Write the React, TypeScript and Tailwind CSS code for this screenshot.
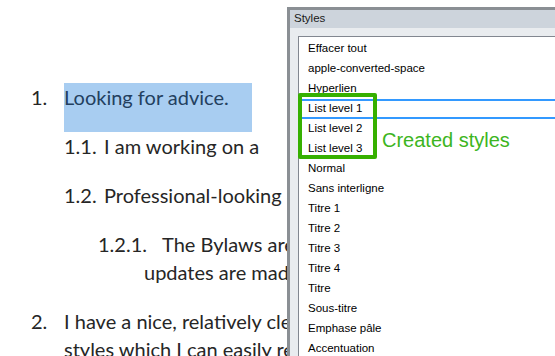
const styleItems = [
  'Effacer tout',
  'apple-converted-space',
  'Hyperlien',
  'List level 1',
  'List level 2',
  'List level 3',
  'Normal',
  'Sans interligne',
  'Titre 1',
  'Titre 2',
  'Titre 3',
  'Titre 4',
  'Titre',
  'Sous-titre',
  'Emphase pâle',
  'Accentuation',
  'Emphase intense',
];

const StylesPane = () => {
  return (
    <div className="absolute left-[287px] top-[7px] right-0 bottom-0 flex flex-col border-l-[3px] border-t-[3px] border-[#8a8f94] bg-[#e9ecef] font-['Liberation_Sans',sans-serif]">
      <div className="h-[18px] flex items-center pl-[4px] bg-[#cdd4dc] text-[11.5px] text-[#1a1a1a]">
        Styles
      </div>
      <div className="flex-1 pt-[8px] pl-[8px] overflow-hidden">
        <div className="h-full border-l border-t border-[#828790] bg-white pt-[2px]">
          {styleItems.map((name) => (
            <div
              key={name}
              className={`h-[20px] flex items-center pl-[9px] text-[11.5px] text-black whitespace-nowrap ${
                name === 'List level 1' ? 'border-y-2 border-[#3399ff]' : ''
              }`}
            >
              {name}
            </div>
          ))}
        </div>
      </div>
    </div>
  );
};

const App = () => {
  return (
    <div className="relative w-[555px] h-[356px] overflow-hidden bg-white">
      {/* document, clipped where the pane covers it */}
      <div className="w-[287px] h-full overflow-hidden pt-[83px] whitespace-nowrap font-['Lato',sans-serif] text-[20px] leading-[28px] text-[#262626]">
        {/* 1. */}
        <div className="flex pl-[31px]">
          <span className="w-[33px] shrink-0">1.</span>
          <span className="shrink-0 bg-[#a8cdf1] text-[#23405f] w-[188px] h-[49px]">Looking for advice.</span>
        </div>
        {/* 1.1 */}
        <div className="flex pl-[64px] pb-[21px]">
          <span className="w-[40px] shrink-0">1.1.</span>
          <span className="shrink-0">I am working on a</span>
        </div>
        {/* 1.2 */}
        <div className="flex pl-[64px] pb-[21px]">
          <span className="w-[40px] shrink-0">1.2.</span>
          <span className="shrink-0">Professional-looking output is important</span>
        </div>
        {/* 1.2.1 */}
        <div className="pb-[21px]">
          <div className="flex pl-[98px]">
            <span className="w-[64px] shrink-0">1.2.1.</span>
            <span className="shrink-0">The Bylaws are revised often, and</span>
          </div>
          <div className="pl-[144px]">updates are made by several people</div>
        </div>
        {/* 2. */}
        <div className="flex pl-[31px]">
          <span className="w-[33px] shrink-0">2.</span>
          <div className="shrink-0">
            <div>I have a nice, relatively clean set of list</div>
            <div>styles which I can easily reuse</div>
          </div>
        </div>
      </div>

      <StylesPane />

      {/* annotation */}
      <div className="absolute left-[298px] top-[93px] w-[79px] h-[66px] border-4 border-[#36b000] rounded-[2px]" />
      <div className="absolute left-[382px] top-[130px] leading-[20px] text-[20px] text-[#3cb521] font-['Liberation_Sans',sans-serif] whitespace-nowrap">
        Created styles
      </div>
    </div>
  );
};

export default App;
